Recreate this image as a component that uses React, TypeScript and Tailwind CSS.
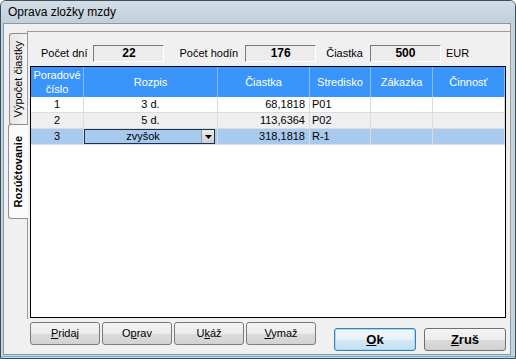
import React from "react";

const font = { fontFamily: '"Liberation Sans", Arial, sans-serif' };

function Field({ value }: { value: string }) {
  return (
    <div className="w-[71px] h-[17px] bg-[#ececec] border-t border-l border-t-[#7a7a7a] border-l-[#7a7a7a] border-b border-r border-b-white border-r-white flex items-center justify-center text-[12px] font-bold text-black">
      {value}
    </div>
  );
}

function SmallBtn({ children }: { children: React.ReactNode }) {
  return (
    <div className="w-[70px] h-[23px] rounded-[3px] border border-[#7b7b7b] bg-[linear-gradient(#f4f4f4_0%,#ececec_50%,#dcdcdc_51%,#d2d2d2_100%)] flex items-center justify-center text-[11px] text-black">
      {children}
    </div>
  );
}

function BigBtn({ children, focused }: { children: React.ReactNode; focused?: boolean }) {
  return (
    <div
      className={
        "w-[82px] h-[23px] rounded-[3px] border flex items-center justify-center text-[13px] font-bold text-black " +
        (focused
          ? "border-[#3c7fb1] bg-[linear-gradient(#f2f8fc_0%,#e6f1f9_50%,#d4e7f5_51%,#c6dff1_100%)] shadow-[inset_0_0_0_1px_#a8d8f2]"
          : "border-[#707070] bg-[linear-gradient(#f4f4f4_0%,#ececec_50%,#dcdcdc_51%,#d0d0d0_100%)]")
      }
    >
      {children}
    </div>
  );
}

const cols = [
  { w: "w-[53px]", label: ["Poradové", "číslo"] },
  { w: "w-[134px]", label: ["Rozpis"] },
  { w: "w-[92px]", label: ["Čiastka"] },
  { w: "w-[61px]", label: ["Stredisko"] },
  { w: "w-[62px]", label: ["Zákazka"] },
  { w: "w-[72px]", label: ["Činnosť"] },
];

const rows = [
  { n: "1", r: "3 d.", c: "68,1818", s: "P01", bg: "bg-white" },
  { n: "2", r: "5 d.", c: "113,6364", s: "P02", bg: "bg-[#efefef]" },
  { n: "3", r: "zvyšok", c: "318,1818", s: "R-1", bg: "bg-[#a9caef]", sel: true },
];

export default function App() {
  return (
    <div style={font} className="w-[516px] h-[359px] bg-white">
      <div className="w-[516px] h-[359px] flex flex-col rounded-t-[6px] border border-[#3e4f5c] bg-[#c6d4de] overflow-hidden">
        <div className="h-[22px] shrink-0 flex items-center pl-[7px] text-[12px] text-black bg-[linear-gradient(#d3dee6,#c0cfda)]">
          Oprava zložky mzdy
        </div>
        <div className="flex-1 flex flex-col ml-[2px] mr-[4px] mb-[3px] border border-[#8799a6] bg-[#f0f0f0]">
          <div className="flex flex-1 pt-[7px] pl-[4px] pr-[1px]">
            {/* tabs */}
            <div className="w-[19px] shrink-0 flex flex-col pt-[2px]">
              <div className="h-[92px] w-[18px] ml-[1px] border border-r-0 border-[#8f8f8f] rounded-l-[3px] bg-[linear-gradient(90deg,#e6e6e6,#f4f4f4)] flex items-center justify-center">
                <span className="[writing-mode:vertical-rl] rotate-180 text-[11px] text-black whitespace-nowrap">
                  Výpočet čiastky
                </span>
              </div>
              <div className="h-[95px] w-[20px] -mt-[1px] border border-r-0 border-[#8f8f8f] rounded-l-[3px] bg-[#fafafa] flex items-center justify-center relative z-10 -mr-[1px]">
                <span className="[writing-mode:vertical-rl] rotate-180 text-[11px] font-bold text-black whitespace-nowrap">
                  Rozúčtovanie
                </span>
              </div>
            </div>
            {/* panel */}
            <div className="flex-1 flex flex-col border border-b-0 border-[#9c9c9c] bg-[#f0f0f0] pl-[2px] pr-[4px]">
              <div className="h-[34px] flex items-center pt-[8px] text-[11px] text-black">
                <span className="ml-[11px] mr-[6px]">Počet dní</span>
                <Field value="22" />
                <span className="ml-[15px] mr-[7px]">Počet hodín</span>
                <Field value="176" />
                <span className="ml-[10px] mr-[7px]">Čiastka</span>
                <Field value="500" />
                <span className="ml-[5px]">EUR</span>
              </div>
              <div className="flex-1 flex flex-col border border-black bg-white mb-[1px]">
                <div className="flex h-[30px] bg-[#3a95fb] text-white text-[11px]">
                  {cols.map((c, i) => (
                    <div
                      key={i}
                      className={c.w + " shrink-0 flex flex-col items-center justify-center leading-[14px] border-r border-[#86bdf8]"}
                    >
                      {c.label.map((l) => (
                        <span key={l}>{l}</span>
                      ))}
                    </div>
                  ))}
                </div>
                {rows.map((r) => (
                  <div key={r.n} className={"flex h-[16px] text-[11px] text-black " + r.bg}>
                    <div className="w-[53px] shrink-0 border-r border-b border-[#dcdcdc] flex items-center justify-center">{r.n}</div>
                    <div className="w-[134px] shrink-0 border-r border-b border-[#dcdcdc] flex items-center">
                      {r.sel ? (
                        <div className="w-[131px] h-[15px] border border-[#1c2f55] bg-[#a9caef] flex items-center">
                          <span className="flex-1 text-center">{r.r}</span>
                          <div className="w-[13px] h-[13px] bg-[linear-gradient(#ececec,#cfcfcf)] border-l border-[#9a9a9a] flex items-center justify-center">
                            <svg width="7" height="4" viewBox="0 0 7 4"><path d="M0 0h7L3.5 4z" fill="#000" /></svg>
                          </div>
                        </div>
                      ) : (
                        <span className="flex-1 text-center">{r.r}</span>
                      )}
                    </div>
                    <div className="w-[92px] shrink-0 border-r border-b border-[#dcdcdc] flex items-center justify-end pr-[4px]">{r.c}</div>
                    <div className="w-[61px] shrink-0 border-r border-b border-[#dcdcdc] flex items-center pl-[2px]">{r.s}</div>
                    <div className="w-[62px] shrink-0 border-r border-b border-[#dcdcdc]"></div>
                    <div className="w-[72px] shrink-0 border-r border-b border-[#dcdcdc]"></div>
                  </div>
                ))}
              </div>
            </div>
          </div>
          <div className="h-[35px] shrink-0 flex items-start pl-[26px] pt-[3px]">
            <div className="flex gap-[2px]">
              <SmallBtn><span><u>P</u>ridaj</span></SmallBtn>
              <SmallBtn><span>O<u>p</u>rav</span></SmallBtn>
              <SmallBtn><span>U<u>k</u>áž</span></SmallBtn>
              <SmallBtn><span><u>V</u>ymaž</span></SmallBtn>
            </div>
            <div className="flex gap-[8px] ml-[18px] mt-[6px]">
              <BigBtn focused><span><u>O</u>k</span></BigBtn>
              <BigBtn><span><u>Z</u>ruš</span></BigBtn>
            </div>
          </div>
        </div>
        <div className="h-[1px] bg-[#5bb6e6] -mt-[2px] mb-[1px]"></div>
      </div>
    </div>
  );
}
